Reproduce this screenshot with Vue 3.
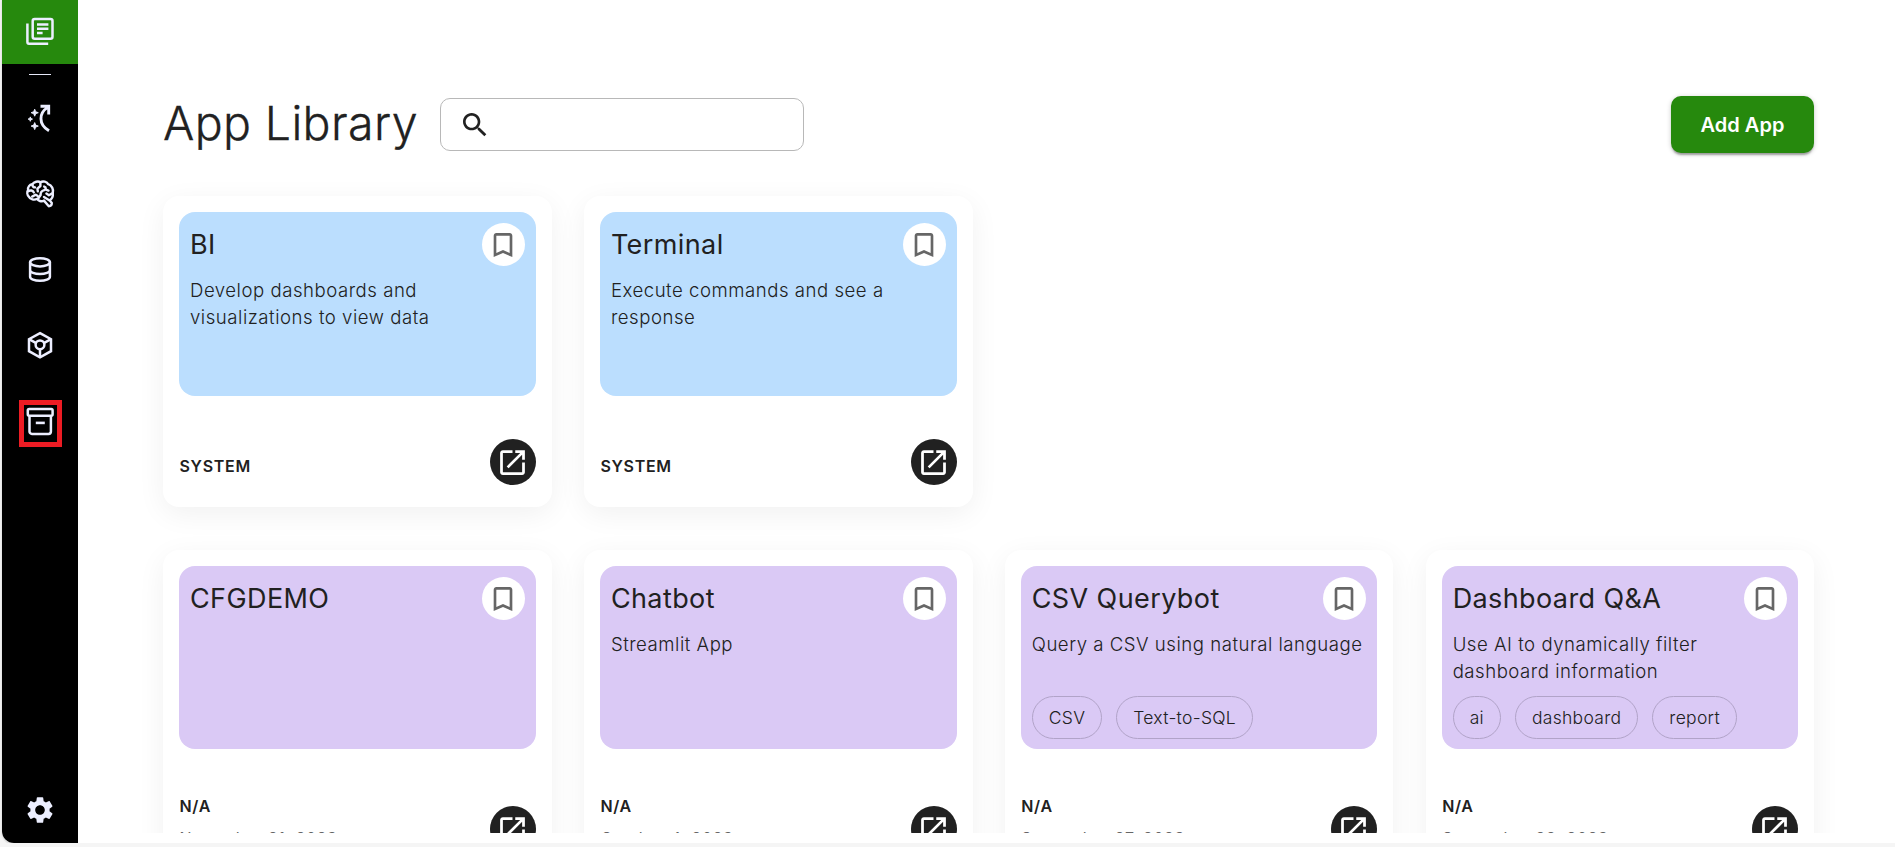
<script setup>
const systemApps = [
  { name: 'BI', text: 'Develop dashboards and visualizations to view data', owner: 'SYSTEM' },
  { name: 'Terminal', text: 'Execute commands and see a response', owner: 'SYSTEM' },
]
const apps = [
  { name: 'CFGDEMO', owner: 'N/A', date: 'November 21, 2023' },
  { name: 'Chatbot', text: 'Streamlit App', owner: 'N/A', date: 'October 4, 2023' },
  { name: 'CSV Querybot', text: 'Query a CSV using natural language', tags: ['CSV', 'Text-to-SQL'], owner: 'N/A', date: 'September 27, 2023' },
  { name: 'Dashboard Q&A', text: 'Use AI to dynamically filter dashboard information', tags: ['ai', 'dashboard', 'report'], owner: 'N/A', date: 'September 22, 2023' },
]
const groups = [
  { kind: 'system', items: systemApps },
  { kind: 'custom', items: apps },
]
</script>

<template>
  <div class="shell">
    <nav class="side">
      <a class="home">
        <svg width="32" height="32" viewBox="0 0 32 32" fill="none" stroke="#eceeff" stroke-width="2.5">
          <rect x="8.7" y="4" width="19.8" height="19.8" rx="2" />
          <path d="M3.4 8.5v18.6a1.6 1.6 0 0 0 1.6 1.6h19.2" />
          <path d="M13 9.6h11.4M13 13.8h11.4M13 18h5.6" stroke-width="2.5" />
        </svg>
      </a>
      <span class="rule"></span>
      <a class="item">
        <svg width="32" height="32" viewBox="0 0 32 32">
          <path d="M16.5 4.2H24.7V12.5M23.7 5.4C15 11 14 22 25 28.8" fill="none" stroke="#eceeff" stroke-width="2.9" />
          <path d="M10.7 7.2l1 2.5 2.6 1-2.6 1-1 2.5-1-2.5-2.6-1 2.6-1zM6.3 14.9l.6 1.6 1.6.6-1.6.6-.6 1.6-.6-1.6-1.6-.6 1.6-.6zM10.7 20.6l1 2.5 2.6 1-2.6 1-1 2.5-1-2.5-2.6-1 2.6-1z" fill="#eceeff" stroke="#eceeff" stroke-width=".9" />
        </svg>
      </a>
      <a class="item">
        <svg width="32" height="32" viewBox="0 0 32 32" fill="none" stroke="#eceeff" stroke-width="2.4" stroke-linecap="round" stroke-linejoin="round">
          <path d="M8.2 6.3C10 3.6 14.3 2.8 16.4 4.2C19 2.7 23 3.6 24.2 6.2C27.8 7.2 29.8 11.4 28.8 15C29.2 18.6 28 21 25.6 22.3L27.8 25C27.8 27 26.6 28.2 24.8 28.2L20 22.6C17.5 24.2 14 22.7 13.2 20.8C10.3 22.4 6 21.4 5 18.8C3 16.8 2.8 13.8 4.1 12C3.6 9 5.6 6.8 8.2 6.3Z" />
          <path d="M8.4 6.5C8.4 8.3 9.4 9.4 11 9.4M4.3 13.2C6.5 11.8 9 12.4 9.8 14.4M8.2 18.6L11.6 16.7L13.4 17.8M16.4 4.4V8L13.4 10.6L13.8 13.4M20.2 8.6C22.4 9.2 22.1 11.3 20.2 12.2C17.7 13 16.4 14.4 16.6 17L14 20.7M21.3 11.4L24.5 12.6M28.2 15.4L24.9 17.2L22.4 15.6M25.2 22.2L20 19" />
        </svg>
      </a>
      <a class="item">
        <svg width="32" height="32" viewBox="0 0 32 32" fill="none" stroke="#eceeff" stroke-width="2.5">
          <ellipse cx="16" cy="9.3" rx="9.9" ry="4.1" />
          <path d="M6.1 9.3v14.4c0 2.3 4.4 4.1 9.9 4.1s9.9-1.8 9.9-4.1V9.3M6.1 16.9c0 2.3 4.4 4.1 9.9 4.1s9.9-1.8 9.9-4.1" />
        </svg>
      </a>
      <a class="item">
        <svg width="32" height="32" viewBox="0 0 32 32" fill="none" stroke="#eceeff" stroke-width="2.5">
          <path d="M16 4.2l11 6v12L16 28.3l-11-6.1v-12z" />
          <circle cx="16" cy="15.8" r="4.4" />
          <path d="M5 10.2l7.2 3.9M27 10.2l-7.2 3.9M16 20.2v8" />
        </svg>
      </a>
      <a class="item marked">
        <svg width="32" height="32" viewBox="0 0 32 32" fill="none" stroke="#eceeff" stroke-width="2.5">
          <rect x="3.8" y="4" width="24.8" height="6.7" rx="1.4" />
          <path d="M5.5 10.7v15.8a2.4 2.4 0 0 0 2.4 2.4h16.6a2.4 2.4 0 0 0 2.4-2.4v-15.8" />
          <path d="M11.8 17.9h9" stroke-width="2.6" />
        </svg>
      </a>
      <a class="settings">
        <svg width="32" height="32" viewBox="0 0 24 24" fill="#eceeff">
          <path d="M19.14 12.94c.04-.3.06-.61.06-.94 0-.32-.02-.64-.07-.94l2.03-1.58c.18-.14.23-.41.12-.61l-1.92-3.32c-.12-.22-.37-.29-.59-.22l-2.39.96c-.5-.38-1.03-.7-1.62-.94L14.4 2.81c-.04-.24-.24-.41-.48-.41h-3.84c-.24 0-.43.17-.47.41l-.36 2.54c-.59.24-1.13.57-1.62.94l-2.39-.96c-.22-.08-.47 0-.59.22L2.74 8.87c-.12.21-.08.47.12.61l2.03 1.58c-.05.3-.09.63-.09.94s.02.64.07.94l-2.03 1.58c-.18.14-.23.41-.12.61l1.92 3.32c.12.22.37.29.59.22l2.39-.96c.5.38 1.03.7 1.62.94l.36 2.54c.05.24.24.41.48.41h3.84c.24 0 .44-.17.47-.41l.36-2.54c.59-.24 1.13-.56 1.62-.94l2.39.96c.22.08.47 0 .59-.22l1.92-3.32c.12-.22.07-.47-.12-.61l-2.01-1.58zM12 15.6c-1.98 0-3.6-1.62-3.6-3.6s1.62-3.6 3.6-3.6 3.6 1.62 3.6 3.6-1.62 3.6-3.6 3.6z" />
        </svg>
      </a>
    </nav>

    <main class="content">
      <header class="top">
        <h1>App Library</h1>
        <div class="search">
          <svg width="32" height="32" viewBox="0 0 24 24" fill="#212121">
            <path d="M15.5 14h-.79l-.28-.27C15.41 12.59 16 11.11 16 9.5 16 5.91 13.09 3 9.5 3S3 5.91 3 9.5 5.91 16 9.5 16c1.61 0 3.09-.59 4.23-1.57l.27.28v.79l5 4.99L20.49 19l-4.99-5zm-6 0C7.01 14 5 11.99 5 9.5S7.01 5 9.5 5 14 7.01 14 9.5 11.99 14 9.5 14z" />
          </svg>
        </div>
        <button class="add">Add App</button>
      </header>

      <section v-for="g in groups" :key="g.kind" class="grid" :class="g.kind">
        <article v-for="a in g.items" :key="a.name" class="card">
          <div class="hero">
            <div class="head">
              <h2>{{ a.name }}</h2>
              <span class="save">
                <svg width="32" height="32" viewBox="0 0 24 24" fill="#666">
                  <path d="M17 3H7c-1.1 0-1.99.9-1.99 2L5 21l7-3 7 3V5c0-1.1-.9-2-2-2zm0 15l-5-2.18L7 18V5h10v13z" />
                </svg>
              </span>
            </div>
            <p>{{ a.text }}</p>
            <div v-if="a.tags" class="tags">
              <span v-for="t in a.tags" :key="t">{{ t }}</span>
            </div>
          </div>
          <div class="foot">
            <div class="meta">
              <div class="owner">{{ a.owner }}</div>
              <div v-if="a.date" class="date">{{ a.date }}</div>
            </div>
            <span class="open">
              <svg width="33" height="33" viewBox="0 0 24 24" fill="#fff">
                <path d="M19 19H5V5h7V3H5c-1.11 0-2 .9-2 2v14c0 1.1.89 2 2 2h14c1.1 0 2-.9 2-2v-7h-2v7zM14 3v2h3.59l-9.83 9.83 1.41 1.41L19 6.41V10h2V3h-7z" />
              </svg>
            </span>
          </div>
        </article>
      </section>
    </main>
  </div>
</template>

<style>
body {
  margin: 0;
  background: #f5f5f5;
  overflow: hidden;
}
</style>

<style scoped>
* {
  box-sizing: border-box;
}
h1, h2, p {
  margin: 0;
}
.shell {
  display: flex;
  height: 843px;
  margin-left: 2px;
  background: #fff;
  border-bottom-left-radius: 12px;
  box-shadow: 0 2px 0 #e0e0e0, 0 0 3px #d0d0d0;
  overflow: hidden;
  color: #212121;
  font-family: Inter, "Liberation Sans", sans-serif;
}
.side {
  width: 76px;
  flex: none;
  background: #000;
  display: flex;
  flex-direction: column;
  align-items: center;
}
svg {
  display: block;
}
.home {
  width: 100%;
  height: 64px;
  background: #26890d;
  display: flex;
  align-items: center;
  justify-content: center;
  padding-bottom: 2px;
}
.rule {
  width: 22px;
  height: 1px;
  background: #e6e8f8;
  margin: 10px 0 5px;
}
.item {
  width: 100%;
  height: 75.75px;
  display: flex;
  align-items: center;
  justify-content: center;
  position: relative;
}
.marked::after {
  content: "";
  box-sizing: border-box;
  position: absolute;
  left: 17px;
  top: 17px;
  width: 43px;
  height: 47px;
  border: 5px solid #ed1c24;
}
.settings {
  margin-top: auto;
  margin-bottom: 17px;
}
.content {
  flex: 1;
  height: 833px;
  overflow: hidden;
  padding: 96px 81px 0 85px;
  width: 1815px;
}
.top {
  display: flex;
  align-items: center;
  height: 57px;
  margin-bottom: 43px;
}
h1 {
  width: 277px;
  margin-top: -3px;
  font-size: 46.5px;
  font-weight: 300;
  letter-spacing: 0.35px;
  line-height: 54px;
  white-space: nowrap;
  -webkit-text-stroke: 0.3px #212121;
}
.search {
  width: 364px;
  height: 53px;
  border: 1px solid #b8b8b8;
  border-radius: 10px;
  display: flex;
  align-items: center;
  padding-left: 18px;
}
.add {
  margin-left: auto;
  width: 143px;
  height: 57px;
  border: 0;
  border-radius: 10px;
  background: #26890d;
  color: #fff;
  font: 600 20px Inter, "Liberation Sans", sans-serif;
  box-shadow: 0 3px 2px -1px rgba(0, 0, 0, .3), 0 1px 5px rgba(0, 0, 0, .2);
}
.grid {
  display: grid;
  grid-template-columns: repeat(4, 388.7px);
  gap: 32.2px;
  margin-bottom: 43px;
}
.card {
  height: 311px;
  padding: 16px;
  border-radius: 16px;
  background: #fff;
  box-shadow: 0 7px 29px rgba(0, 0, 0, .06);
  display: flex;
  flex-direction: column;
}
.custom .card {
  height: 345px;
}
.hero {
  height: 184px;
  border-radius: 16px;
  padding: 11px 11px 10px;
  display: flex;
  flex-direction: column;
  background: #bbdefe;
}
.custom .hero {
  height: 183px;
  background: #dac9f5;
}
.head {
  display: flex;
  justify-content: space-between;
  align-items: center;
  height: 43px;
}
h2 {
  font-size: 27px;
  font-weight: 400;
  letter-spacing: 0.4px;
  line-height: 40px;
}
.save {
  width: 43px;
  height: 43px;
  border-radius: 50%;
  background: #fff;
  display: flex;
  align-items: center;
  justify-content: center;
  padding-right: 1px;
}
p {
  margin-top: 11px;
  width: 335px;
  font-size: 18.6px;
  font-weight: 300;
  letter-spacing: 0.52px;
  line-height: 27px;
}
.tags {
  display: flex;
  gap: 14px;
  margin-top: auto;
}
.tags span {
  height: 43px;
  padding: 0 16px;
  border: 1px solid #b1a3c8;
  border-radius: 22px;
  font-size: 17.5px;
  font-weight: 300;
  letter-spacing: 0.3px;
  line-height: 41px;
}
.foot {
  display: flex;
  justify-content: space-between;
  margin-top: 43px;
}
.meta {
  padding: 16px 0 0 0.5px;
}
.custom .foot {
  margin-top: 57px;
}
.custom .meta {
  padding-top: 0;
}
.owner {
  font-size: 16px;
  font-weight: 600;
  letter-spacing: 0.7px;
  line-height: 22px;
}
.custom .owner {
  margin-top: -11px;
}
.date {
  margin-top: 10px;
  font-size: 16px;
  letter-spacing: 0.6px;
  line-height: 22px;
  color: #666;
}
.open {
  width: 46px;
  height: 46px;
  border-radius: 50%;
  background: #212121;
  display: flex;
  align-items: center;
  justify-content: center;
  padding-right: 1px;
}
</style>
